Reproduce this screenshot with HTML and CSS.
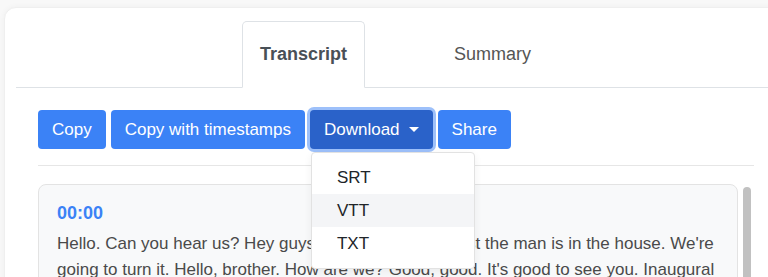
FILE: index.html
```html
<!DOCTYPE html>
<html lang="en">
<head>
    <meta charset="UTF-8">
    <meta name="viewport" content="width=device-width, initial-scale=1.0">
    <title>Transcript</title>
    <link rel="stylesheet" href="styles.css">
</head>
<body>
    <div class="card">
        <ul class="tabs">
            <li class="tab active">Transcript</li>
            <li class="tab">Summary</li>
        </ul>

        <div class="tab-pane">
            <div class="toolbar">
                <button class="btn">Copy</button>
                <button class="btn">Copy with timestamps</button>
                <div class="dropdown">
                    <button class="btn active">Download<span class="caret"></span></button>
                    <div class="dropdown-menu">
                        <a class="dropdown-item">SRT</a>
                        <a class="dropdown-item hover">VTT</a>
                        <a class="dropdown-item">TXT</a>
                    </div>
                </div>
                <button class="btn">Share</button>
            </div>

            <hr>

            <div class="transcript-scroll">
                <div class="transcript-list">
                    <div class="segment">
                        <div class="timestamp">00:00</div>
                        <p>Hello. Can you hear us? Hey guys. How is it going? Just the man is in the house. We're going to turn it. Hello, brother. How are we? Good, good. It's good to see you. Inaugural episode of the show, and we are very happy to have you here with us today. Let's get started.</p>
                    </div>
                    <div class="segment">
                        <div class="timestamp">00:32</div>
                        <p>So tell us a little bit about yourself and what you have been working on lately.</p>
                    </div>
                </div>
                <div class="scrollbar"><div class="scrollbar-thumb"></div></div>
            </div>
        </div>
    </div>
</body>
</html>
```

FILE: styles.css
```css
html, body {
    overflow: hidden;
}

body {
    font-family: "Liberation Sans", Arial, sans-serif;
    margin: 0;
    padding: 7px 0 0 4px;
    background-color: #f8f8f8;
}

.card {
    background: #fff;
    width: 784px;
    box-sizing: border-box;
    padding: 13px 11px 0;
    border: 1px solid #efefef;
    border-radius: 12px;
    box-shadow: 0 0 6px rgba(0, 0, 0, 0.04);
    height: 320px;
}

.tabs {
    list-style: none;
    margin: 0;
    padding: 0 0 0 226px;
    display: flex;
    gap: 71px;
    border-bottom: 1px solid #dee2e6;
}

.tab {
    font-size: 18px;
    line-height: 65px;
    padding: 0 17px;
    color: #555;
    border: 1px solid transparent;
    border-radius: 5px 5px 0 0;
    margin-bottom: -1px;
}

.tab.active {
    font-weight: bold;
    color: #495057;
    background: #fff;
    border-color: #dee2e6 #dee2e6 #fff;
}

.tab-pane {
    padding: 22px 22px 0;
}

.toolbar {
    display: flex;
    gap: 5px;
}

.btn {
    font-family: inherit;
    font-size: 17px;
    line-height: 25px;
    padding: 7px 14px;
    color: #fff;
    background-color: #3b82f6;
    border: none;
    border-radius: 4px;
    cursor: pointer;
}

.btn.active {
    background-color: #2a62c9;
    box-shadow: 0 0 0 3px rgba(59, 130, 246, 0.5);
}

.caret {
    display: inline-block;
    margin-left: 9px;
    vertical-align: 3px;
    border-top: 5px solid #fff;
    border-left: 5px solid transparent;
    border-right: 5px solid transparent;
}

.dropdown {
    position: relative;
}

.dropdown-menu {
    position: absolute;
    top: calc(100% + 3px);
    left: 1px;
    z-index: 10;
    width: 164px;
    box-sizing: border-box;
    padding: 8px 0;
    background: #fff;
    border: 1px solid #e2e2e2;
    border-radius: 4px;
    box-shadow: 0 3px 8px rgba(0, 0, 0, 0.06);
}

.dropdown-item {
    display: block;
    font-size: 17px;
    line-height: 25px;
    padding: 4px 25px;
    color: #212529;
}

.dropdown-item.hover {
    background-color: #f4f5f7;
}

hr {
    margin: 16px 0 18px;
    border: none;
    border-top: 1px solid #e6e6e6;
}

.transcript-scroll {
    display: flex;
    height: 300px;
    overflow: hidden;
}

.transcript-list {
    flex: 1;
}

.scrollbar {
    flex: none;
    width: 16px;
    box-sizing: border-box;
    padding: 3px 3px 0 5px;
}

.scrollbar-thumb {
    height: 220px;
    background-color: #c1c1c1;
    border-radius: 4px;
}

.segment {
    background: #f8f9fa;
    border: 1px solid #e3e3e3;
    border-radius: 8px;
    padding: 16px 18px;
    margin-bottom: 12px;
}

.timestamp {
    font-size: 18px;
    line-height: 25px;
    font-weight: bold;
    color: #3b82f6;
    margin-bottom: 5px;
}

.segment p {
    margin: 0;
    font-size: 17px;
    line-height: 26px;
    color: #4a4a4a;
}
```
